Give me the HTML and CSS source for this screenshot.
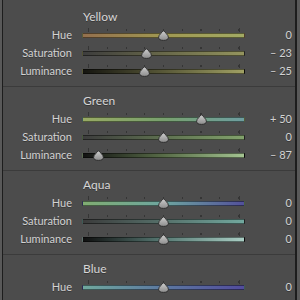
FILE: index.html
```html
<!DOCTYPE html>
<html lang="en">
<head>
    <meta charset="UTF-8">
    <title>HSL</title>
    <link rel="stylesheet" href="styles.css">
</head>
<body>
    <svg class="defs" width="0" height="0">
        <defs>
            <linearGradient id="knob" x1="0" y1="0" x2="0" y2="1">
                <stop offset="0" stop-color="#cfcfcf"/>
                <stop offset="1" stop-color="#8c8c8c"/>
            </linearGradient>
            <symbol id="thumb" viewBox="0 0 11 11">
                <path d="M5.5 0.6 C6.8 2.6 10.4 4.6 10.4 7.4 C10.4 9.4 8.4 10.4 5.5 10.4 C2.6 10.4 0.6 9.4 0.6 7.4 C0.6 4.6 4.2 2.6 5.5 0.6 Z" fill="url(#knob)" stroke="#262626" stroke-width="0.9"/>
            </symbol>
        </defs>
    </svg>

    <div class="panel">
        <div class="group">
            <div class="group-title">Yellow</div>
            <div class="row">
                <span class="label">Hue</span>
                <div class="track yellow-hue"><svg class="thumb" style="--v: 0"><use href="#thumb"/></svg></div>
                <span class="value">0</span>
            </div>
            <div class="row">
                <span class="label">Saturation</span>
                <div class="track yellow-sat"><svg class="thumb" style="--v: -23"><use href="#thumb"/></svg></div>
                <span class="value">– 23</span>
            </div>
            <div class="row">
                <span class="label">Luminance</span>
                <div class="track yellow-lum"><svg class="thumb" style="--v: -25"><use href="#thumb"/></svg></div>
                <span class="value">– 25</span>
            </div>
        </div>

        <div class="group">
            <div class="group-title">Green</div>
            <div class="row">
                <span class="label">Hue</span>
                <div class="track green-hue"><svg class="thumb" style="--v: 50"><use href="#thumb"/></svg></div>
                <span class="value">+ 50</span>
            </div>
            <div class="row">
                <span class="label">Saturation</span>
                <div class="track green-sat"><svg class="thumb" style="--v: 0"><use href="#thumb"/></svg></div>
                <span class="value">0</span>
            </div>
            <div class="row">
                <span class="label">Luminance</span>
                <div class="track green-lum"><svg class="thumb" style="--v: -87"><use href="#thumb"/></svg></div>
                <span class="value">– 87</span>
            </div>
        </div>

        <div class="group">
            <div class="group-title">Aqua</div>
            <div class="row">
                <span class="label">Hue</span>
                <div class="track aqua-hue"><svg class="thumb" style="--v: 0"><use href="#thumb"/></svg></div>
                <span class="value">0</span>
            </div>
            <div class="row">
                <span class="label">Saturation</span>
                <div class="track aqua-sat"><svg class="thumb" style="--v: 0"><use href="#thumb"/></svg></div>
                <span class="value">0</span>
            </div>
            <div class="row">
                <span class="label">Luminance</span>
                <div class="track aqua-lum"><svg class="thumb" style="--v: 0"><use href="#thumb"/></svg></div>
                <span class="value">0</span>
            </div>
        </div>

        <div class="group last">
            <div class="group-title">Blue</div>
            <div class="row">
                <span class="label">Hue</span>
                <div class="track blue-hue"><svg class="thumb" style="--v: 0"><use href="#thumb"/></svg></div>
                <span class="value">0</span>
            </div>
        </div>
    </div>
</body>
</html>
```

FILE: styles.css
```css
body {
    margin: 0;
    height: 300px;
    overflow: hidden;
    background: #595959;
    font-family: 'Lato', 'Open Sans', sans-serif;
    font-size: 11px;
    color: #d2d2d2;
}

.defs {
    position: absolute;
}

.panel {
    margin-left: 2px;
    width: 292px;
    height: 297px;
    padding-top: 3px;
    background: #4c4c4c;
    border-left: 1px solid #1d1d1d;
    border-right: 2px solid #1d1d1d;
}

.group {
    padding: 5px 0 6px;
    border-bottom: 1px solid #3b3b3b;
}

.group.last {
    border-bottom: none;
    padding-bottom: 0;
}

.group-title {
    height: 18px;
    line-height: 18px;
    padding-left: 80px;
    font-size: 12px;
    color: #d6d6d6;
    text-shadow: 0 1px 0 rgba(0, 0, 0, 0.3);
}

.row {
    display: grid;
    grid-template-columns: 69px 163px 37px;
    column-gap: 10px;
    align-items: start;
    height: 18px;
    line-height: 18px;
}

.label {
    text-align: right;
    text-shadow: 0 1px 0 rgba(0, 0, 0, 0.3);
}

.value {
    text-align: right;
    margin-left: -10px;
    text-shadow: 0 1px 0 rgba(0, 0, 0, 0.3);
}

.track {
    position: relative;
    height: 3px;
    margin-top: 7px;
    border: 1px solid rgba(0, 0, 0, 0.45);
    border-radius: 1px;
}

/* tick marks above the track */
.track::before {
    content: "";
    position: absolute;
    left: 5px;
    top: -5px;
    width: 152px;
    height: 2px;
    background: repeating-linear-gradient(to right, #353535 0, #353535 1px, transparent 1px, transparent 18.75px);
}

.track::after {
    content: "";
    position: absolute;
    left: 5px;
    top: -6px;
    width: 150px;
    height: 4px;
    border-left: 1px solid #353535;
    border-right: 1px solid #353535;
}

.thumb {
    position: absolute;
    top: -4px;
    left: calc(75px + var(--v) * 0.75px);
    width: 11px;
    height: 11px;
    z-index: 1;
}

.yellow-hue { background: linear-gradient(to right, #94704e, #a09852 50%, #a2aa64); }
.yellow-sat { background: linear-gradient(to right, #3d3d3d, #68684a 50%, #94945e); }
.yellow-lum { background: linear-gradient(to right, #151510, #585838 50%, #a0a064); }

.green-hue { background: linear-gradient(to right, #98aa64, #78a06e 50%, #6e9ea0); }
.green-sat { background: linear-gradient(to right, #3d3d3d, #5e7050 50%, #82a26c); }
.green-lum { background: linear-gradient(to right, #121212, #586c48 50%, #a4c492); }

.aqua-hue { background: linear-gradient(to right, #80ac72, #6ea6a0 50%, #52509a); }
.aqua-sat { background: linear-gradient(to right, #3b3b3b, #56706a 50%, #72a89e); }
.aqua-lum { background: linear-gradient(to right, #0f0f0f, #587a74 50%, #aacec4); }

.blue-hue { background: linear-gradient(to right, #70a89e, #5c78a0 50%, #524c9c); }
```
